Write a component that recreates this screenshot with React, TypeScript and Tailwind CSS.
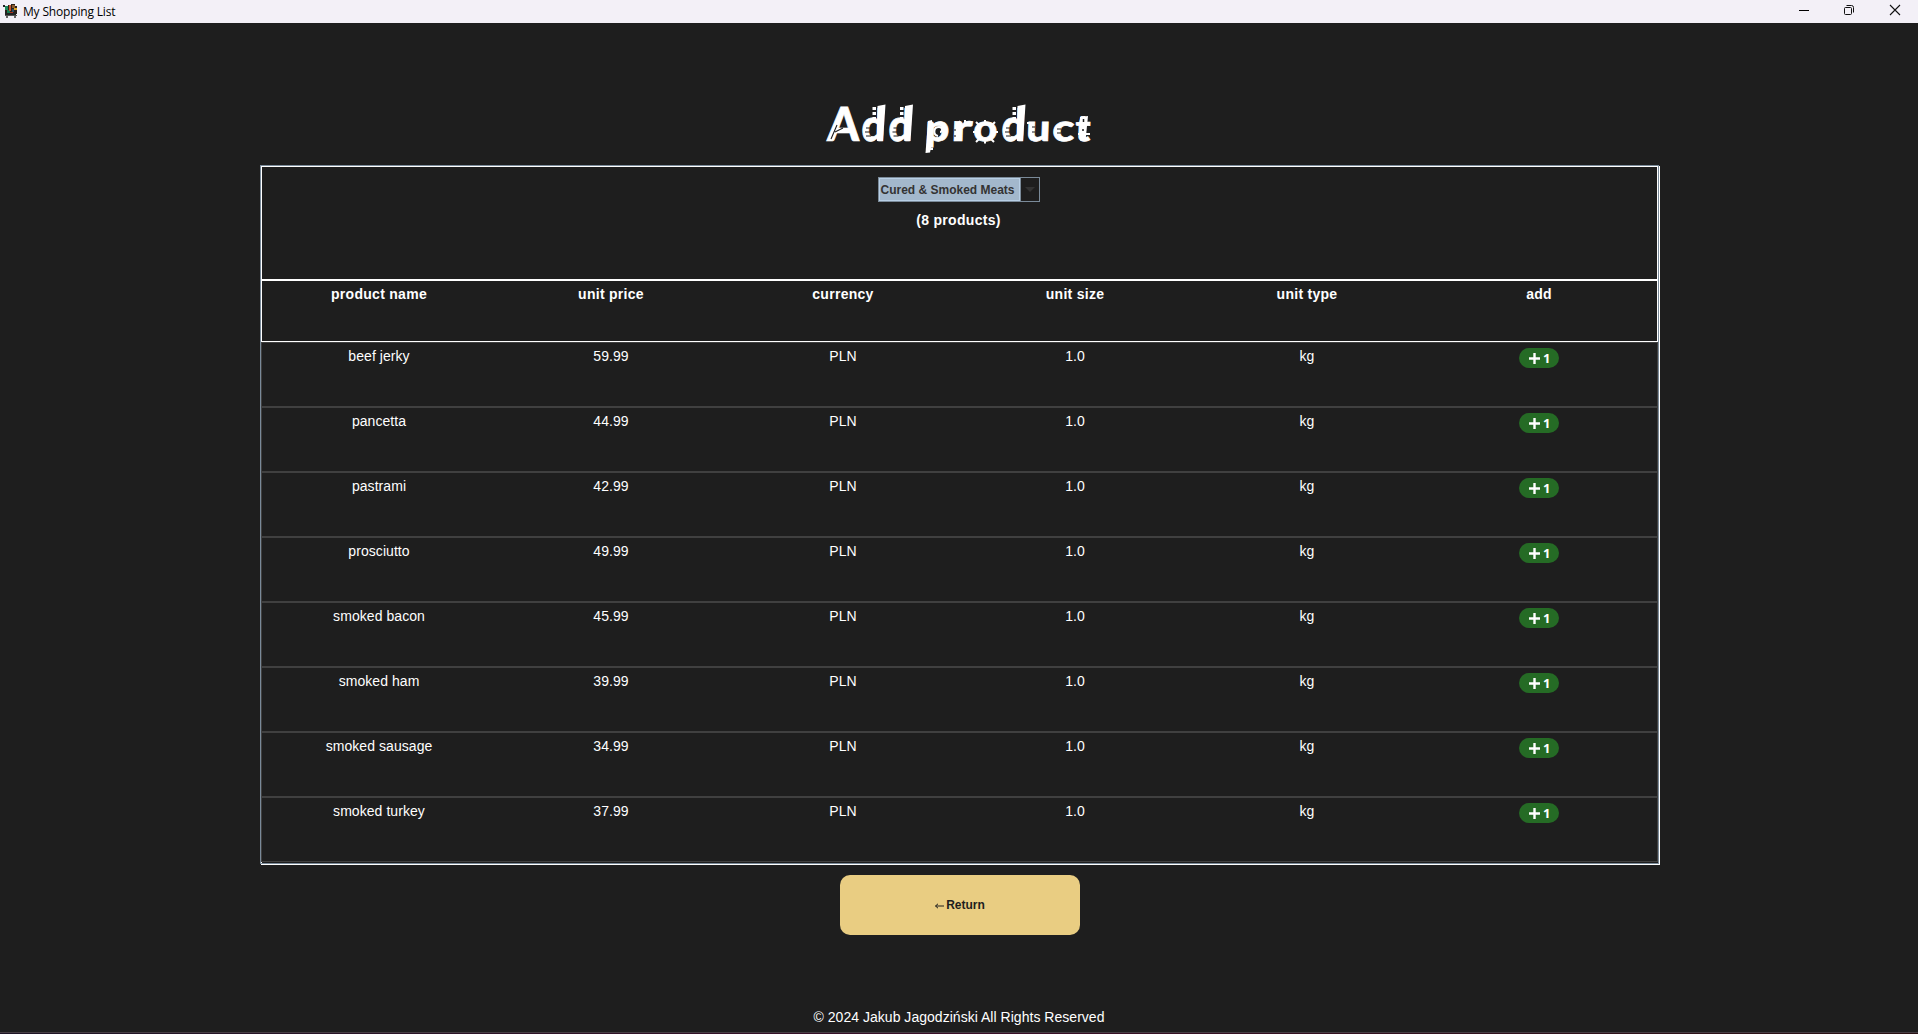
import React from "react";

const columns = ["product name", "unit price", "currency", "unit size", "unit type", "add"];

const products: [string, string][] = [
  ["beef jerky", "59.99"],
  ["pancetta", "44.99"],
  ["pastrami", "42.99"],
  ["prosciutto", "49.99"],
  ["smoked bacon", "45.99"],
  ["smoked ham", "39.99"],
  ["smoked sausage", "34.99"],
  ["smoked turkey", "37.99"],
];

function CartIcon() {
  return (
    <svg width="16" height="16" viewBox="0 0 16 16" shapeRendering="crispEdges">
      <path d="M0 1h2v2h1v9H2V3H0z" fill="#222" />
      <path d="M2 2h3V1h3V0h4v2h2v8H3V7H2z" fill="#2b2018" />
      <path d="M2 2h3v4H2z" fill="#1d8a5b" />
      <path d="M4 6h3v3H4z" fill="#167a50" />
      <path d="M6 1h2v6H6z" fill="#c4552f" />
      <path d="M9 1h3v3H9z" fill="#8a5a2c" />
      <path d="M9 5h2v3H9z" fill="#274b6b" />
      <path d="M11 4h3v2h-3z" fill="#e0a31f" />
      <path d="M7 8h3v1H7z" fill="#a8321f" />
      <path d="M3 9h10v2H3z" fill="#222" />
      <path d="M2 11h12v1H2z" fill="#555" />
      <path d="M3 12h2v2H3zM11 12h2v2h-2z" fill="#666" />
    </svg>
  );
}

function TitleBar() {
  return (
    <header className="flex h-[23px] shrink-0 items-center justify-between bg-[#f3f0f7] text-black">
      <div className="flex items-center gap-1 pl-[3px]">
        <CartIcon />
        <span className="font-['Open_Sans',sans-serif] text-[12px] leading-[23px] tracking-[-0.17px]">My Shopping List</span>
      </div>
      <div className="flex items-center gap-[34px] pr-[17px] pb-[3px]">
        <svg width="12" height="12" viewBox="0 0 12 12"><path d="M2 6.5h10" stroke="#000" /></svg>
        <svg width="12" height="12" viewBox="0 0 12 12" fill="none" stroke="#111">
          <rect x="1.5" y="3.5" width="7" height="7" rx="1" />
          <path d="M3.5 1.5h5a2 2 0 0 1 2 2v5" />
        </svg>
        <svg width="12" height="12" viewBox="0 0 12 12"><path d="M1 1l10 10M11 1L1 11" stroke="#111" strokeWidth="1.1" /></svg>
      </div>
    </header>
  );
}

const glyphs: [string, number, number, number][] = [
  ["A", 827, 32, 47],
  ["d", 861, 24, 44],
  ["d", 888, 24, 44],
  ["p", 925, 24, 37],
  ["r", 951, 21, 38],
  ["o", 973, 24, 37],
  ["d", 1001, 24, 44],
  ["u", 1026, 24, 37],
  ["c", 1052, 22, 37],
  ["t", 1075, 15, 37],
];

const tallStems = [0, 27.5, 140];

function Title() {
  return (
    <svg width="280" height="66" viewBox="819 96 280 66" role="img" aria-label="Add product">
      <g fill="#fff" stroke="#fff" strokeWidth="0.7" fontFamily="Lato, sans-serif" fontWeight="900">
        {glyphs.map(([g, x, w, size], i) => (
          <text key={i} textLength={w} lengthAdjust="spacingAndGlyphs" transform={`translate(${x} 140.5) skewX(-2)`} fontSize={size}>
            {g}
          </text>
        ))}
      </g>
      {/* Flared stems with detached rungs on every "d" */}
      {tallStems.map((dx) => (
        <g key={dx} transform={`translate(${dx} 0)`}>
          <path d="M877.5 106l8-1.500-2.500 36.500h-6z" fill="#fff" />
          <path d="M872.5 107h3.500v3h-3.500zM872.5 112h3.500v3h-3.500zM872.5 117h3.500v3h-3.500z" fill="#fff" />
          <path d="M866 128h5M865 132h6M866 136h5" stroke="#1e1e1e" strokeWidth="1.1" />
        </g>
      ))}
      {/* Carved strokes */}
      <path d="M831 139l6-14M835 132l8-4M955 129v2M955 135v2M1057 129h4M1057 133h4M1032 127h3M1032 132h3" fill="none" stroke="#1e1e1e" strokeWidth="1.1" />
      <g fill="none" stroke="#fff" strokeWidth="2">
        <path d="M938 136c-5-1-5-9 1-9c4 0 4 5 1 5" />
        <path d="M976 122l3 3M985 120v4M995 122l-3 3M973 132h3M994 132h4M976 142l3-3M985 143.500v-4M994 142l-3-3M959 121l2 3M965 120v3M1078 134h12M1027 123h5" />
      </g>
      <path d="M1080 117l8-1-2.500 25h-5z" fill="#fff" />
      <path d="M1083.500 119v3M1083 129v2" stroke="#1e1e1e" strokeWidth="1.500" />
      <path d="M928 121l4-1v22l-2 10.500-4.500.5z" fill="#fff" />
      <path d="M930 145h3M930 149h3" stroke="#fff" strokeWidth="2" />
    </svg>
  );
}

function CategorySelect() {
  return (
    <button className="flex h-[25px] w-[162px] border border-[#7a8a99]">
      <span className="flex h-full w-[141px] items-center border border-[#b8cfe5] bg-[#a3b8cc] pl-px text-[12px] font-bold whitespace-nowrap text-[#333]">
        Cured &amp; Smoked Meats
      </span>
      <span className="flex h-full flex-1 items-center justify-center border-l border-[#7a8a99]">
        <svg width="10" height="5" viewBox="0 0 10 5"><path d="M0 0h10L5 5z" fill="#333" /></svg>
      </span>
    </button>
  );
}

function AddButton() {
  return (
    <button className="mt-[5px] flex h-5 w-10 items-center gap-[3px] rounded-full bg-[#256b25] pl-[10px] text-white">
      <svg width="11" height="11" viewBox="0 0 11 11" className="mt-px"><path d="M5.5 0v11M0 5.5h11" stroke="#fff" strokeWidth="2.4" /></svg>
      <span className="mt-px font-['Open_Sans',sans-serif] text-[13px] leading-none font-bold">1</span>
    </button>
  );
}

export default function App() {
  return (
    <div className="flex h-[1034px] w-[1918px] flex-col overflow-hidden bg-[#1e1e1e] font-['Liberation_Sans',Arial,sans-serif] text-white">
      <TitleBar />
      <main className="flex flex-1 flex-col items-center">
        <h1 className="mt-[73px] h-[69px]"><Title /></h1>
        <section className="ml-[2px] grid h-[700px] w-[1400px]">
          <div className="col-start-1 row-start-1 mt-px ml-px border border-white" />
          <div className="col-start-1 row-start-1 mr-px mb-px border border-[#7a8a99]" />
          <div className="z-10 col-start-1 row-start-1 mt-px ml-px h-[696px] w-[1397px]">
            <div className="flex h-[114px] flex-col items-center border border-white pt-[10px] pr-[2px]">
              <CategorySelect />
              <p className="mt-2 text-[14px] leading-5 font-bold tracking-[0.3px]">(8 products)</p>
            </div>
            <div className="grid h-[62px] grid-cols-[repeat(6,232px)] border border-white pt-[5px] pl-px text-center text-[14px] leading-4 font-bold tracking-[0.28px]">
              {columns.map((c) => <span key={c}>{c}</span>)}
            </div>
            {products.map(([name, price]) => (
              <div key={name} className="grid h-[65px] grid-cols-[repeat(6,232px)] border border-[#404040] pl-px text-center text-[14px] leading-4 tracking-[0.06px]">
                <span className="pt-[5px]">{name}</span>
                <span className="pt-[5px]">{price}</span>
                <span className="pt-[5px]">PLN</span>
                <span className="pt-[5px]">1.0</span>
                <span className="pt-[5px]">kg</span>
                <span className="flex justify-center"><AddButton /></span>
              </div>
            ))}
          </div>
        </section>
        <button className="mt-[10px] ml-[2px] flex h-[60px] w-[240px] items-center justify-center rounded-[10px] bg-[#e9cd82] text-[12px] font-bold text-[#1e1e1e]">
          <svg width="10" height="6" viewBox="0 0 10 6" className="mt-px"><path d="M.5 3H9M3 .8L.5 3 3 5.200" stroke="#1e1e1e" fill="none" /></svg>
          <span className="ml-px">Return</span>
        </button>
        <p className="mt-[74px] text-[14px] leading-4 tracking-[0.03px]">© 2024 Jakub Jagodziński All Rights Reserved</p>
      </main>
      <div className="h-[2px] shrink-0 border-t border-[#473e44] bg-linear-to-r from-[#1e1526] via-[#3a1028] to-[#2a1214]" />
    </div>
  );
}
